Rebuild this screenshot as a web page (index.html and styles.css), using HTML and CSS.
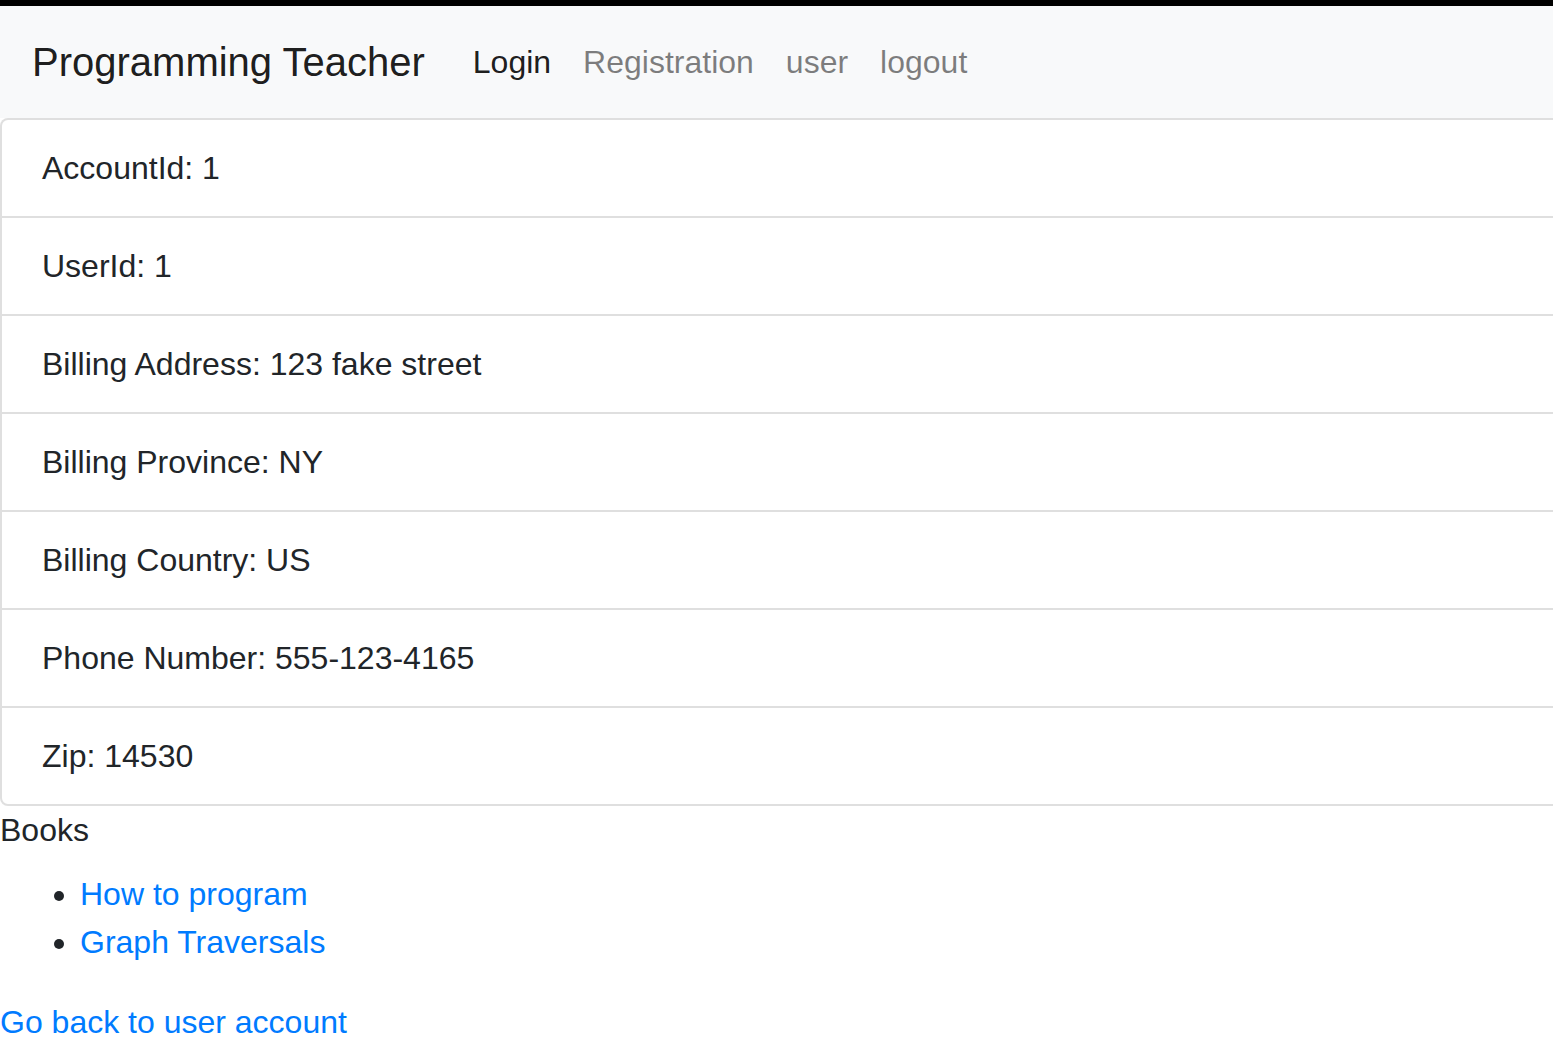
FILE: index.html
```html
<!DOCTYPE html>
<html>
<head>
<meta charset="utf-8">
<title>Programming Teacher</title>
<link rel="stylesheet" href="styles.css">
</head>
<body>
<nav class="navbar">
  <a class="brand" href="#">Programming Teacher</a>
  <ul class="nav">
    <li><a class="nav-link active" href="#">Login</a></li>
    <li><a class="nav-link" href="#">Registration</a></li>
    <li><a class="nav-link" href="#">user</a></li>
    <li><a class="nav-link" href="#">logout</a></li>
  </ul>
</nav>
<ul class="list-group">
  <li class="list-item">AccountId: 1</li>
  <li class="list-item">UserId: 1</li>
  <li class="list-item">Billing Address: 123 fake street</li>
  <li class="list-item">Billing Province: NY</li>
  <li class="list-item">Billing Country: US</li>
  <li class="list-item">Phone Number: 555-123-4165</li>
  <li class="list-item">Zip: 14530</li>
</ul>
<div class="books-title">Books</div>
<ul class="books">
  <li><a href="#">How to program</a></li>
  <li><a href="#">Graph Traversals</a></li>
</ul>
<a class="back" href="#">Go back to user account</a>
</body>
</html>
```
FILE: styles.css
```css
html, body {
  margin: 0;
  padding: 0;
  overflow: hidden;
}
body {
  font-family: "Liberation Sans", Arial, sans-serif;
  font-size: 32px;
  line-height: 48px;
  color: #212529;
  background: #fff;
  border-top: 6px solid #000;
}
a {
  color: #007bff;
  text-decoration: none;
}
.navbar {
  display: flex;
  align-items: center;
  background: #f8f9fa;
  padding: 16px 32px;
  height: 80px;
}
.brand {
  font-size: 40px;
  line-height: 60px;
  padding: 10px 0;
  margin-right: 32px;
  color: rgba(0, 0, 0, 0.9);
  white-space: nowrap;
}
.nav {
  display: flex;
  list-style: none;
  margin: 0;
  padding: 0;
}
.nav-link {
  display: block;
  padding: 16px;
  color: rgba(0, 0, 0, 0.5);
}
.nav-link.active {
  color: rgba(0, 0, 0, 0.9);
}
.list-group {
  list-style: none;
  margin: 0 -40px 0 0;
  padding: 0;
}
.list-item {
  padding: 24px 40px;
  border: 2px solid rgba(0, 0, 0, 0.125);
  margin-bottom: -2px;
  background: #fff;
}
.list-item:first-child {
  border-top-left-radius: 8px;
  border-top-right-radius: 8px;
}
.list-item:last-child {
  margin-bottom: 0;
  border-bottom-left-radius: 8px;
  border-bottom-right-radius: 8px;
}
.books-title {
  margin: 0;
}
.books {
  margin: 16px 0 32px;
  padding-left: 80px;
}
.back {
  display: inline-block;
}
```
